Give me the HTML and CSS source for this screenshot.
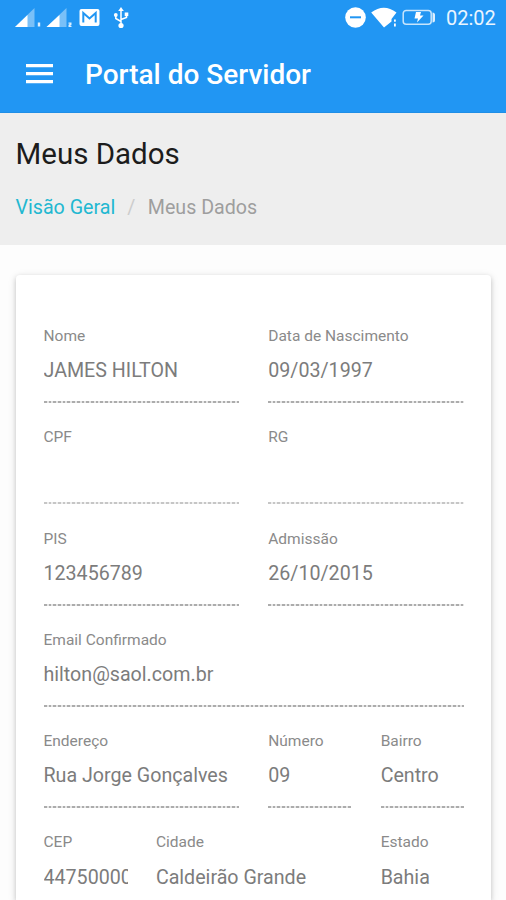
FILE: index.html
```html
<!DOCTYPE html>
<html lang="pt-BR">
<head>
<meta charset="utf-8">
<title>Portal do Servidor</title>
<link rel="stylesheet" href="styles.css">
</head>
<body>
<header class="top">
  <div class="status">
    <svg class="status-left" width="118" height="22" viewBox="0 0 118 22" fill="#fff">
      <path d="M20.500 1V20H1Z" fill-opacity=".4"/><path d="M13.500 8V20H1Z"/><rect x="23.800" y="15.500" width="2.400" height="4" opacity=".85"/>
      <path d="M52.500 1V20H32.500Z" fill-opacity=".4"/><path d="M45.500 8V20H32.500Z"/><path d="M54.500 15.500H57.500V17.800L56 18.700H57.500V20H54.500V17.800L56 16.700H54.500Z" opacity=".85"/>
      <rect x="65.500" y="2" width="20" height="17" rx="2"/><path d="M69.300 15.500V6L75.500 11.500L81.700 6V15.500" fill="none" stroke="#2196f3" stroke-width="2"/>
      <path d="M107 3V18M107 14.500L101.800 11.500V8M107 12.500L112.500 10.500V7" fill="none" stroke="#fff" stroke-width="1.500"/><path d="M107 0L109.800 4H104.200Z"/><circle cx="107" cy="18.500" r="2.600"/><circle cx="101.800" cy="8" r="1.900"/><rect x="110.700" y="5.500" width="3.600" height="3.600"/>
    </svg>
    <svg class="status-right" width="92" height="22" viewBox="0 0 92 22" fill="#fff">
      <circle cx="10.500" cy="10.500" r="10.300"/><rect x="5" y="9.300" width="11" height="2" fill="#2196f3"/>
      <path d="M26.200 5.500Q38.800-4 51.500 5.500L46.500 12V14.500L39 20.500Z"/><rect x="49" y="12.500" width="1.800" height="2.200"/><rect x="49" y="16.500" width="1.800" height="3"/>
      <rect x="58.200" y="3.500" width="28" height="13.800" rx="3" fill="none" stroke="#fff" stroke-width="1.500" opacity=".75"/><path d="M87.500 5.500Q90 5.500 90 8V13Q90 15.500 87.500 15.500Z" opacity=".85"/><path d="M71 5H76L75 8.500H78.500L72 15.500L73 11.500H69.500Z"/>
    </svg>
    <span class="clock">02:02</span>
  </div>
  <div class="bar">
    <svg width="27" height="20" viewBox="0 0 27 20" fill="#fff"><path d="M0 0H27V3.200H0ZM0 8H27V11.200H0ZM0 16H27V19.200H0Z"/></svg>
    <span class="brand">Portal do Servidor</span>
  </div>
</header>
<section class="heading">
  <h1>Meus Dados</h1>
  <nav><a class="link">Visão Geral</a><span class="sep">/</span><span class="here">Meus Dados</span></nav>
</section>
<main class="card">
  <div class="field w2"><label>Nome</label><p>JAMES HILTON</p></div>
  <div class="field w2"><label>Data de Nascimento</label><p>09/03/1997</p></div>
  <div class="field w2 light"><label>CPF</label><p></p></div>
  <div class="field w2 light"><label>RG</label><p></p></div>
  <div class="field w2"><label>PIS</label><p>123456789</p></div>
  <div class="field w2"><label>Admissão</label><p>26/10/2015</p></div>
  <div class="field w4"><label>Email Confirmado</label><p>hilton@saol.com.br</p></div>
  <div class="field w2"><label>Endereço</label><p>Rua Jorge Gonçalves</p></div>
  <div class="field"><label>Número</label><p>09</p></div>
  <div class="field"><label>Bairro</label><p>Centro</p></div>
  <div class="field"><label>CEP</label><p>44750000</p></div>
  <div class="field w2"><label>Cidade</label><p>Caldeirão Grande</p></div>
  <div class="field"><label>Estado</label><p>Bahia</p></div>
</main>
</body>
</html>
```

FILE: styles.css
```css
* { box-sizing: border-box; }
html, body { height: 900px; overflow: hidden; }
body { display: flex; flex-direction: column; margin: 0; background: #fdfdfd; font-family: Roboto, sans-serif; color: #7c7c7c; }
.top { flex: none; height: 113px; background: #2196f3; border-bottom: 1px solid #1f8ee6; color: #fff; }
.status { display: flex; align-items: center; height: 36px; padding: 0 10px 0 14px; }
.status-right { margin-left: auto; }
.clock { margin-left: 9px; font-size: 20px; line-height: 36px; width: 50px; white-space: nowrap; color: #e9f5ff; }
.bar { display: flex; align-items: center; height: 76px; padding-left: 26px; }
.brand { margin-left: 32px; padding-top: 2px; font-size: 28px; font-weight: 500; line-height: 76px; }
.heading { flex: none; height: 132px; padding: 22px 15.5px 0; background: #eee; }
h1 { margin: 0; font-size: 29.500px; font-weight: 400; line-height: 38px; color: #1c1c1c; }
nav { display: flex; margin-top: 22px; font-size: 19.650px; line-height: 26px; }
.link { color: #22b8d1; }
.sep { margin: 0 12.500px 0 12px; color: #ccc; }
.here { color: #9e9e9e; }
.card { flex: 1; min-height: 0; overflow: hidden; display: grid; grid-template-columns: repeat(4, minmax(0, 1fr)); column-gap: 29.500px; grid-auto-rows: 101.250px; align-content: start; margin: 29.500px 15px 0 15.500px; padding: 50.500px 27.500px 0 28px; border-radius: 4px 4px 0 0; background: #fff; box-shadow: 0 2px 5px rgba(0, 0, 0, .18), 0 2px 10px rgba(0, 0, 0, .1); }
.w2 { grid-column: span 2; }
.w4 { grid-column: span 4; }
.field { height: 78px; background: repeating-linear-gradient(90deg, #acacac 0 2.700px, #e6e6e6 2.700px 4.700px) left bottom / 100% 2px no-repeat; }
.light { background-image: repeating-linear-gradient(90deg, #c6c6c6 0 2.700px, #eee 2.700px 4.700px); }
label { display: block; padding-top: 1px; font-size: 15.500px; line-height: 20px; color: #8a8a8a; }
p { margin: 10.300px -1.500px 0 0; height: 30px; font-size: 19.650px; line-height: 30px; white-space: nowrap; overflow: hidden; }
```
